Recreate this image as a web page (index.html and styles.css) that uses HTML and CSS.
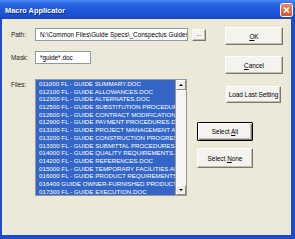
FILE: index.html
```html
<!DOCTYPE html>
<html>
<head>
<meta charset="utf-8">
<link rel="stylesheet" href="styles.css">
</head>
<body>
<div class="window">
  <div class="titlebar">
    <span class="title">Macro Applicator</span>
    <span class="close"><svg width="11" height="12" viewBox="0 0 11 12"><path d="M3 3.5 L8 8.5 M8 3.5 L3 8.5" stroke="#fff" stroke-width="1.6" fill="none"/></svg></span>
  </div>
  <div class="body">
    <div class="top">
      <div class="fields">
        <div class="row path-row">
          <span class="lbl">Path:</span>
          <div class="input path">N:\Common Files\Guide Specs\_Conspectus Guides</div>
          <button class="btn browse"><span>...</span></button>
        </div>
        <div class="row mask-row">
          <span class="lbl">Mask:</span>
          <div class="input mask">*guide*.doc</div>
        </div>
      </div>
      <div class="side">
        <button class="btn big"><span><u>O</u>K</span></button>
        <button class="btn big cancel"><span><u>C</u>ancel</span></button>
      </div>
    </div>
    <div class="bottom">
      <span class="lbl files-lbl">Files:</span>
      <div class="listbox">
        <ul class="items">
          <li>011000 FL - GUIDE SUMMARY.DOC</li>
          <li>012100 FL - GUIDE ALLOWANCES.DOC</li>
          <li>012300 FL - GUIDE ALTERNATES.DOC</li>
          <li>012500 FL - GUIDE SUBSTITUTION PROCEDURES.DOC</li>
          <li>012600 FL - GUIDE CONTRACT MODIFICATION PROCEDURES.DOC</li>
          <li>012900 FL - GUIDE PAYMENT PROCEDURES.DOC</li>
          <li>013100 FL - GUIDE PROJECT MANAGEMENT AND COORDINATION.DOC</li>
          <li>013200 FL - GUIDE CONSTRUCTION PROGRESS DOCUMENTATION.DOC</li>
          <li>013300 FL - GUIDE SUBMITTAL PROCEDURES.DOC</li>
          <li>014000 FL - GUIDE QUALITY REQUIREMENTS.DOC</li>
          <li>014200 FL - GUIDE REFERENCES.DOC</li>
          <li>015000 FL - GUIDE TEMPORARY FACILITIES AND CONTROLS.DOC</li>
          <li>016000 FL - GUIDE PRODUCT REQUIREMENTS.DOC</li>
          <li>016400 GUIDE OWNER-FURNISHED PRODUCTS.DOC</li>
          <li>017300 FL - GUIDE EXECUTION.DOC</li>
        </ul>
        <div class="scrollbar">
          <div class="sb-btn"><span class="tri up"></span></div>
          <div class="sb-track"></div>
          <div class="sb-btn"><span class="tri down"></span></div>
        </div>
      </div>
      <div class="actions">
        <button class="btn load"><span>Load Last Setting</span></button>
        <button class="btn sel default"><span>Select <u>A</u>ll</span></button>
        <button class="btn sel none"><span>Select <u>N</u>one</span></button>
      </div>
    </div>
  </div>
</div>
</body>
</html>
```

FILE: styles.css
```css
html, body {
  margin: 0;
  padding: 0;
  background: #ECE9D8;
}
.window {
  width: 295px;
  height: 239px;
  display: flex;
  flex-direction: column;
  font-family: "Liberation Sans", Arial, sans-serif;
  font-size: 6.4px;
  color: #000;
  overflow: hidden;
}
.titlebar {
  height: 19px;
  flex: 0 0 19px;
  display: flex;
  align-items: center;
  background: linear-gradient(#4b8cf6 0%, #2c66e4 20%, #1f56d8 55%, #1c50d0 85%, #1a45b6 100%);
}
.title {
  padding-left: 5px;
  color: #fff;
  font-weight: bold;
  font-size: 7.4px;
  text-shadow: 1px 1px 0 #0b2a86;
  margin-top: 1px;
}
.close {
  margin-left: auto;
  margin-right: 3px;
  width: 11px;
  height: 12px;
  background: linear-gradient(#f08a66, #d9542b);
  border-radius: 2px;
  box-shadow: 0 0 0 1px #fff;
  display: flex;
}
.body {
  flex: 1;
  background: #ECE9D8;
  border-left: 2px solid #1c4ccc;
  border-right: 4px solid #1c4ccc;
  border-bottom: 4px solid #1c4ccc;
  padding: 8px 8px 0 9px;
}
.top {
  display: flex;
  height: 47px;
}
.fields {
  display: flex;
  flex-direction: column;
}
.row {
  display: flex;
  align-items: center;
}
.path-row { margin-top: 1px; }
.mask-row { margin-top: 10px; }
.lbl {
  width: 24px;
  flex: 0 0 24px;
  color: #222;
}
.input {
  box-sizing: border-box;
  height: 13px;
  background: #fff;
  border: 1px solid #8e9aa4;
  padding-left: 4px;
  line-height: 11px;
  white-space: nowrap;
  overflow: hidden;
}
.path { width: 153px; }
.mask { width: 56px; }
.btn {
  box-sizing: border-box;
  margin: 0;
  padding: 0;
  font-family: inherit;
  font-size: 6.4px;
  color: #000;
  background: #f4f3ee;
  border: 1px solid;
  border-color: #fdfdfb #7a786c #7a786c #fdfdfb;
  box-shadow: inset -1px -1px 0 #c3bfaf;
  border-radius: 1px;
  display: flex;
  align-items: center;
  justify-content: center;
  white-space: nowrap;
}
.btn u { text-decoration: underline; }
.browse {
  width: 14px;
  height: 12px;
  margin-left: 4px;
  font-size: 6px;
  line-height: 6px;
  padding-bottom: 2px;
}
.side {
  margin-left: auto;
  display: flex;
  flex-direction: column;
}
.big {
  width: 58px;
  height: 18px;
}
.cancel { margin-top: 11px; }
.bottom {
  display: flex;
  margin-top: 5px;
}
.files-lbl {
  padding-top: 2px;
}
.listbox {
  box-sizing: border-box;
  width: 152px;
  height: 117px;
  border: 1px solid #8e9aa4;
  background: #fff;
  display: flex;
  overflow: hidden;
}
.items {
  list-style: none;
  margin: 0;
  padding: 0;
  flex: 1;
  min-width: 0;
  overflow: hidden;
  background: #3366c6;
}
.items li {
  height: 7.7px;
  line-height: 7.7px;
  font-size: 6.2px;
  color: #fff;
  padding-left: 3px;
  white-space: nowrap;
  overflow: hidden;
}
.scrollbar {
  width: 10px;
  flex: 0 0 10px;
  border-left: 1px solid #9c9a90;
  background: #f6f5f1;
  display: flex;
  flex-direction: column;
}
.sb-btn {
  height: 10px;
  box-sizing: border-box;
  border: 1px solid;
  border-color: #fff #8d8b80 #8d8b80 #fff;
  background: #f1efe6;
  display: flex;
  align-items: center;
  justify-content: center;
}
.sb-track { flex: 1; }
.tri {
  width: 0;
  height: 0;
  border-left: 2px solid transparent;
  border-right: 2px solid transparent;
}
.tri.up { border-bottom: 2px solid #000; }
.tri.down { border-top: 2px solid #000; }
.actions {
  width: 84px;
  margin-left: 10px;
  display: flex;
  flex-direction: column;
  align-items: flex-start;
}
.load {
  align-self: flex-end;
  width: 55px;
  height: 17px;
  margin-top: 7px;
}
.sel {
  width: 56px;
  height: 19px;
}
.default {
  margin-top: 19px;
  border: 1px solid #000;
  box-shadow: inset 1px 1px 0 #fff, inset -1px -1px 0 #7a786c, inset -2px -2px 0 #c3bfaf;
}
.none {
  margin-top: 7px;
  height: 20px;
}
```
